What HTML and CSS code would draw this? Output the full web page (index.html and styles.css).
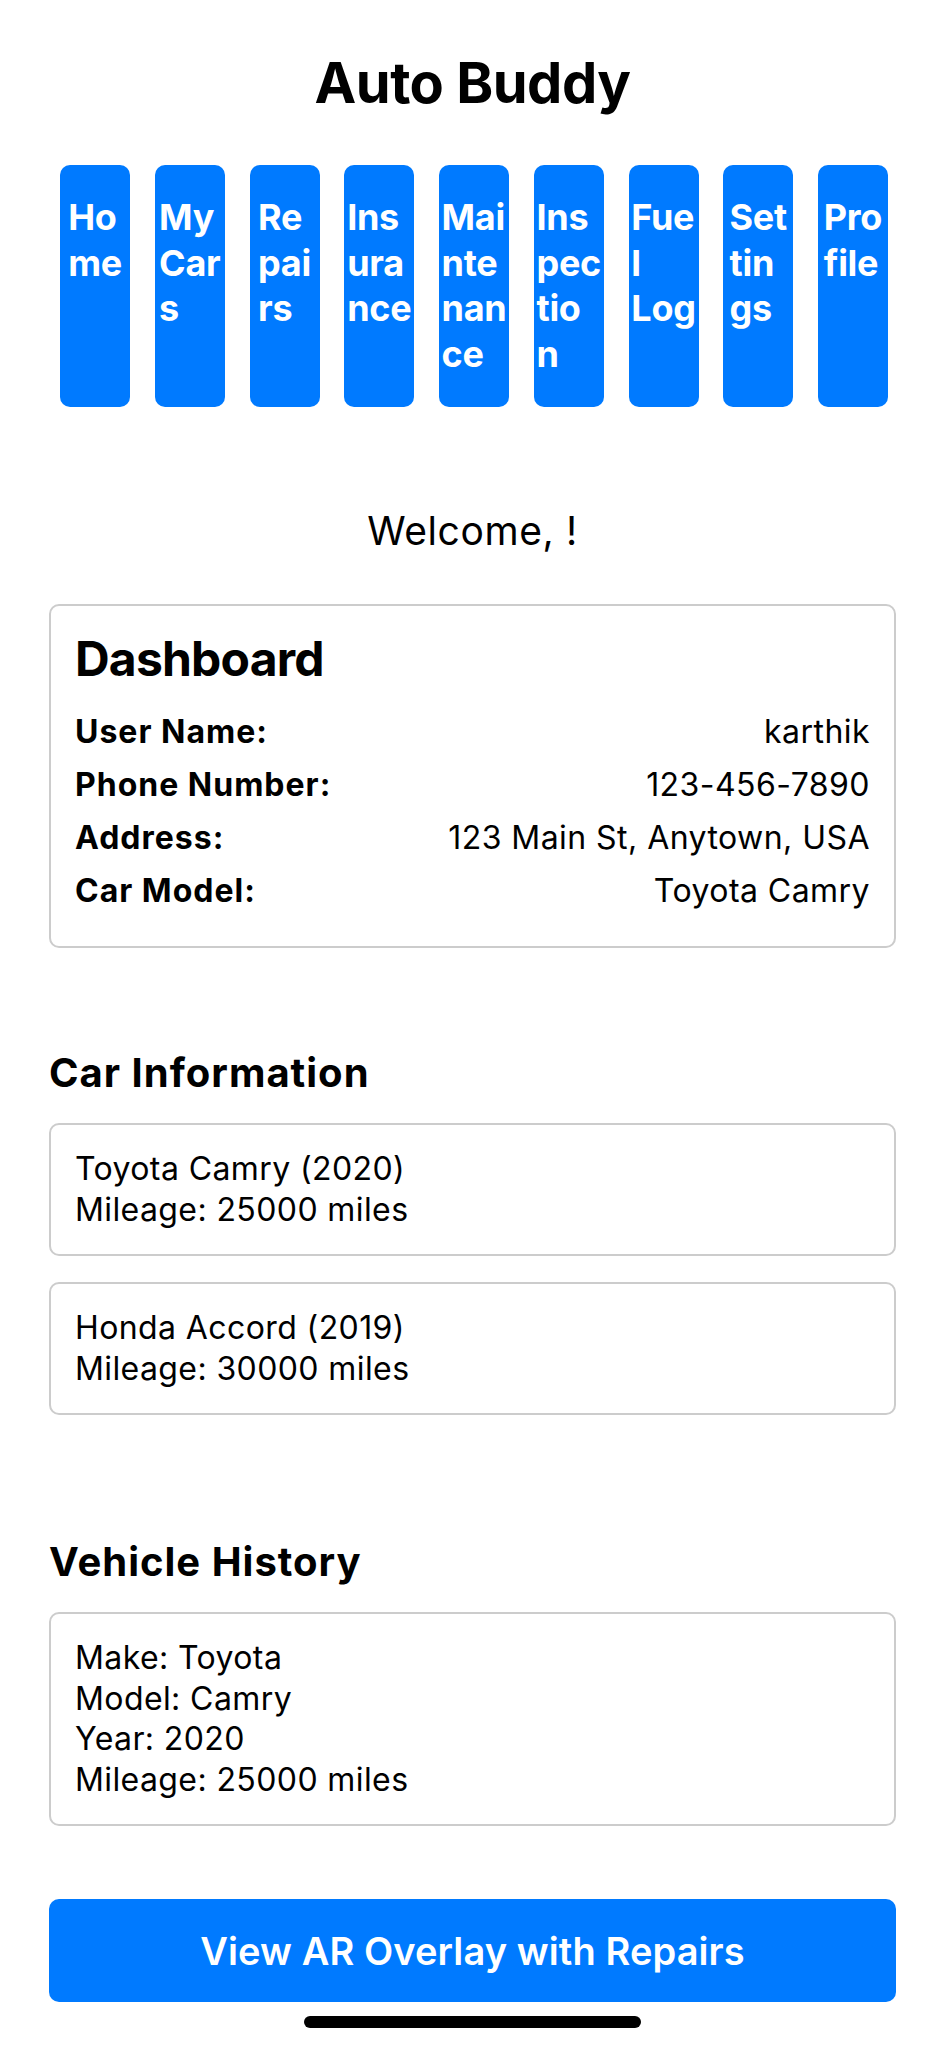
FILE: index.html
```html
<!DOCTYPE html>
<html lang="en">
<head>
<meta charset="utf-8">
<title>Auto Buddy</title>
<link rel="stylesheet" href="styles.css">
</head>
<body>
<main class="app">
  <h1 class="app-title">Auto Buddy</h1>

  <nav class="tabs">
    <a class="tab"><span class="tab-label"><span>Ho</span><span>me</span></span></a>
    <a class="tab"><span class="tab-label"><span>My </span><span>Car</span><span>s</span></span></a>
    <a class="tab"><span class="tab-label"><span>Re</span><span>pai</span><span>rs</span></span></a>
    <a class="tab"><span class="tab-label"><span>Ins</span><span>ura</span><span>nce</span></span></a>
    <a class="tab"><span class="tab-label"><span>Mai</span><span>nte</span><span>nan</span><span>ce</span></span></a>
    <a class="tab"><span class="tab-label"><span>Ins</span><span>pec</span><span>tio</span><span>n</span></span></a>
    <a class="tab"><span class="tab-label"><span>Fue</span><span>l </span><span>Log</span></span></a>
    <a class="tab"><span class="tab-label"><span>Set</span><span>tin</span><span>gs</span></span></a>
    <a class="tab"><span class="tab-label"><span>Pro</span><span>file</span></span></a>
  </nav>

  <p class="welcome">Welcome, !</p>

  <section class="card dashboard">
    <h2 class="card-title">Dashboard</h2>
    <dl class="info-list">
      <div class="info-row"><dt>User Name:</dt><dd>karthik</dd></div>
      <div class="info-row"><dt>Phone Number:</dt><dd>123-456-7890</dd></div>
      <div class="info-row"><dt>Address:</dt><dd>123 Main St, Anytown, USA</dd></div>
      <div class="info-row"><dt>Car Model:</dt><dd>Toyota Camry</dd></div>
    </dl>
  </section>

  <section class="section cars">
    <h2 class="section-title">Car Information</h2>
    <div class="card text-card">
      <p>Toyota Camry (2020)</p>
      <p>Mileage: 25000 miles</p>
    </div>
    <div class="card text-card">
      <p>Honda Accord (2019)</p>
      <p>Mileage: 30000 miles</p>
    </div>
  </section>

  <section class="section history">
    <h2 class="section-title">Vehicle History</h2>
    <div class="card text-card">
      <p>Make: Toyota</p>
      <p>Model: Camry</p>
      <p>Year: 2020</p>
      <p>Mileage: 25000 miles</p>
    </div>
  </section>

  <button class="ar-button" type="button">View AR Overlay with Repairs</button>

  <div class="home-indicator"></div>
</main>
</body>
</html>
```

FILE: styles.css
```css
* {
  box-sizing: border-box;
}

html, body {
  margin: 0;
  padding: 0;
  background: #ffffff;
}

body {
  font-family: Inter, "Noto Sans", "Liberation Sans", sans-serif;
  color: #000000;
}

.app {
  padding: 49px 49px 0 49px;
  display: flex;
  flex-direction: column;
}

.app-title {
  margin: 0;
  font-size: 56px;
  line-height: 68px;
  font-weight: 700;
  text-align: center;
  letter-spacing: -0.5px;
}

/* navigation tabs */
.tabs {
  display: flex;
  justify-content: space-between;
  margin: 48px 8px 0 11px;
}

.tab {
  width: 70px;
  height: 242px;
  background: #007aff;
  border-radius: 10px;
  display: flex;
  justify-content: center;
  align-items: flex-start;
  padding-top: 30px;
  color: #ffffff;
  font-size: 36px;
  line-height: 45.7px;
  font-weight: 700;
  letter-spacing: -0.3px;
  white-space: nowrap;
}

.tab-label {
  display: inline-flex;
  flex-direction: column;
  align-items: flex-start;
}

.welcome {
  margin: 100px 0 0;
  font-size: 39px;
  line-height: 48px;
  text-align: center;
  letter-spacing: 0.6px;
}

/* cards */
.card {
  border: 2px solid #cccccc;
  border-radius: 10px;
  background: #ffffff;
}

.dashboard {
  margin-top: 49px;
  padding: 24px 24px 35px 24px;
}

.card-title {
  margin: 0;
  font-size: 48px;
  line-height: 58px;
  font-weight: 700;
  letter-spacing: -0.8px;
}

.info-list {
  margin: 24px 0 0;
  display: flex;
  flex-direction: column;
  gap: 13px;
}

.info-row {
  display: flex;
  justify-content: space-between;
  font-size: 32px;
  line-height: 40px;
}

.info-row dt {
  font-weight: 700;
  letter-spacing: 1px;
}

.info-row dd {
  margin: 0;
  text-align: right;
  letter-spacing: 0.45px;
}

.section {
  display: flex;
  flex-direction: column;
  gap: 26px;
}

.cars {
  margin-top: 101px;
}

.history {
  margin-top: 123px;
}

.section-title {
  margin: 0;
  font-size: 40px;
  line-height: 48px;
  font-weight: 700;
  letter-spacing: 1px;
}

.text-card {
  padding: 24px 24px;
  font-size: 32px;
  line-height: 40.5px;
  letter-spacing: 0.4px;
}

.text-card p {
  margin: 0;
}

.ar-button {
  margin-top: 73px;
  height: 103px;
  border: none;
  border-radius: 10px;
  background: #007aff;
  color: #ffffff;
  font-family: inherit;
  font-size: 38px;
  font-weight: 600;
  letter-spacing: 0.1px;
}

.home-indicator {
  align-self: center;
  margin-top: 14px;
  width: 337px;
  height: 12px;
  border-radius: 6px;
  background: #000000;
}
```
